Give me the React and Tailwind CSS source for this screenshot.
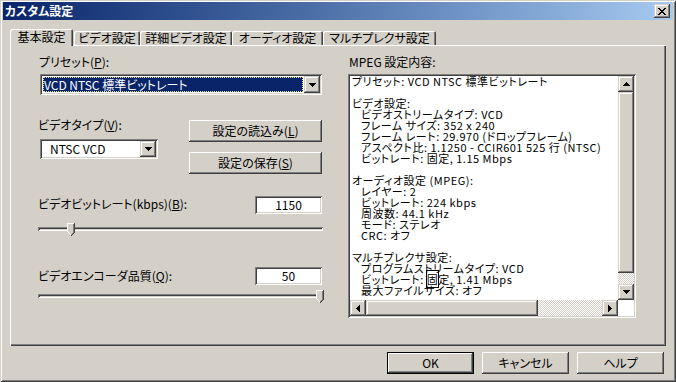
import React from 'react';

const raised = 'shadow-[inset_-1px_-1px_#404040,inset_1px_1px_#ffffff,inset_-2px_-2px_#808080,inset_2px_2px_#d4d0c8]';
const sbBtn = 'shadow-[inset_-1px_-1px_#404040,inset_1px_1px_#d4d0c8,inset_-2px_-2px_#808080,inset_2px_2px_#ffffff]';
const sunken = 'shadow-[inset_1px_1px_#808080,inset_-1px_-1px_#ffffff,inset_2px_2px_#404040,inset_-2px_-2px_#d4d0c8]';
const checker = 'bg-[repeating-conic-gradient(#d4d0c8_0_25%,#ffffff_0_50%)] bg-[length:2px_2px]';

function Arrow({ dir = 'down' }) {
  const rects = [0, 1, 2, 3].map((i) => {
    if (dir === 'down') return { x: i, y: i, w: 7 - 2 * i, h: 1 };
    if (dir === 'up') return { x: i, y: 3 - i, w: 7 - 2 * i, h: 1 };
    if (dir === 'right') return { x: i, y: i, w: 1, h: 7 - 2 * i };
    return { x: 3 - i, y: i, w: 1, h: 7 - 2 * i };
  });
  const vert = dir === 'up' || dir === 'down';
  return (
    <svg width={vert ? 7 : 4} height={vert ? 4 : 7} shapeRendering="crispEdges">
      {rects.map((r, i) => (
        <rect key={i} x={r.x} y={r.y} width={r.w} height={r.h} fill="#000" />
      ))}
    </svg>
  );
}

function Thumb() {
  return (
    <svg width="8" height="13" shapeRendering="crispEdges">
      <polygon points="0,0 8,0 8,9 4,13 0,9" fill="#d4d0c8" />
      <rect x="0" y="0" width="7" height="1" fill="#fff" />
      <rect x="0" y="0" width="1" height="9" fill="#fff" />
      <rect x="7" y="0" width="1" height="9" fill="#404040" />
      <rect x="6" y="1" width="1" height="8" fill="#808080" />
      <rect x="1" y="9" width="1" height="1" fill="#fff" />
      <rect x="2" y="10" width="1" height="1" fill="#fff" />
      <rect x="3" y="11" width="1" height="1" fill="#fff" />
      <rect x="7" y="9" width="1" height="1" fill="#404040" />
      <rect x="6" y="10" width="1" height="1" fill="#404040" />
      <rect x="5" y="11" width="1" height="1" fill="#404040" />
      <rect x="4" y="12" width="1" height="1" fill="#404040" />
      <rect x="6" y="9" width="1" height="1" fill="#808080" />
      <rect x="5" y="10" width="1" height="1" fill="#808080" />
      <rect x="4" y="11" width="1" height="1" fill="#808080" />
    </svg>
  );
}

function Slider({ pos }) {
  return (
    <div className="relative -ml-[2px] w-[285px] h-[13px]">
      <div className={`absolute left-0 right-0 top-[4px] h-[4px] ${sunken}`}></div>
      <div className="absolute top-0" style={{ left: pos }}>
        <Thumb />
      </div>
    </div>
  );
}

function Button({ children, w, def }) {
  return (
    <div
      className={`${w} h-[22px] flex items-center justify-center bg-[#d4d0c8] ${raised} ${def ? 'border border-black' : ''}`}
    >
      {children}
    </div>
  );
}

const tabs = [
  { label: '基本設定', w: 'w-[63px]', active: true },
  { label: 'ビデオ設定', w: 'w-[66px] ml-[1px]' },
  { label: '詳細ビデオ設定', w: 'w-[92px]' },
  { label: 'オーディオ設定', w: 'w-[91px]' },
  { label: 'マルチプレクサ設定', w: 'w-[113px]' },
];

const lines = [
  ['プリセット: VCD NTSC 標準ビットレート', 0],
  ['', 0],
  ['ビデオ設定:', 0],
  ['ビデオストリームタイプ: VCD', 1],
  ['フレーム サイズ: 352 x 240', 1],
  ['フレーム レート: 29.970 (ドロップフレーム)', 1],
  ['アスペクト比: 1.1250 - CCIR601 525 行 (NTSC)', 1],
  ['ビットレート: 固定, 1.15 Mbps', 1],
  ['', 0],
  ['オーディオ設定 (MPEG):', 0],
  ['レイヤー: 2', 1],
  ['ビットレート: 224 kbps', 1],
  ['周波数: 44.1 kHz', 1],
  ['モード: ステレオ', 1],
  ['CRC: オフ', 1],
  ['', 0],
  ['マルチプレクサ設定:', 0],
  ['プログラムストリームタイプ: VCD', 1],
  ['ビットレート: 固定, 1.41 Mbps', 1, true],
  ['最大ファイルサイズ: オフ', 1],
];

export default function App() {
  return (
    <div className="w-[676px] h-[382px] bg-[#d4d0c8] text-black text-[12px] font-['Noto_Sans_CJK_JP','Noto_Sans',sans-serif] [font-feature-settings:'palt'] shadow-[inset_1px_1px_#d4d0c8,inset_-1px_-1px_#404040,inset_2px_2px_#ffffff,inset_-2px_-2px_#808080] pt-[2px] px-[3px] flex flex-col overflow-hidden">
      {/* タイトルバー */}
      <div className="h-[18px] flex items-center justify-between bg-gradient-to-r from-[#0a246a] to-[#a6caf0] pl-[2px] pr-[3px]">
        <span className="text-white font-bold leading-[18px]">カスタム設定</span>
        <div className={`w-[16px] h-[14px] flex items-center justify-center bg-[#d4d0c8] ${sbBtn}`}>
          <svg width="8" height="7" shapeRendering="crispEdges">
            {[0, 1, 2, 3, 4, 5, 6].map((i) => (
              <g key={i}>
                <rect x={i} y={i} width="2" height="1" fill="#000" />
                <rect x={6 - i} y={i} width="2" height="1" fill="#000" />
              </g>
            ))}
          </svg>
        </div>
      </div>

      <div className="flex flex-col pl-[7px] pr-[7px]">
        {/* タブ */}
        <div className="flex items-end h-[16px] mt-[9px]">
          {tabs.map((t) => (
            <div
              key={t.label}
              className={`${t.w} flex items-center justify-center rounded-t-[2px] bg-[#d4d0c8] shadow-[inset_1px_1px_#ffffff,inset_-1px_0_#404040,inset_-2px_0_#808080] ${
                t.active ? 'h-[17px] -mb-[1px] relative z-10 pb-[2px]' : 'h-[14px]'
              }`}
            >
              <span className="leading-[14px] whitespace-nowrap">{t.label}</span>
            </div>
          ))}
        </div>

        {/* パネル */}
        <div className="h-[301px] flex pl-[30px] shadow-[inset_1px_1px_#ffffff,inset_-1px_-1px_#404040,inset_-2px_-2px_#808080]">
          {/* 左列 */}
          <div className="w-[282px] flex flex-col">
            <div className="mt-[10px] leading-[14px] -ml-[1px]">
              プリセット(<u>P</u>):
            </div>
            <div className={`mt-[5px] h-[21px] flex p-[2px] bg-white ${sunken}`}>
              <div className="flex-1 m-[1px] flex items-center bg-[#0a246a] text-white outline outline-1 outline-dotted outline-[#e0e090] -outline-offset-1 pl-[1px] whitespace-nowrap">
                VCD NTSC 標準ビットレート
              </div>
              <div className={`w-[16px] h-[17px] flex items-center justify-center bg-[#d4d0c8] ${sbBtn}`}>
                <Arrow dir="down" />
              </div>
            </div>

            <div className="flex mt-[23px]">
              <div className="w-[118px] flex flex-col">
                <div className="leading-[14px] -ml-[2px]">
                  ビデオタイプ(<u>V</u>):
                </div>
                <div className={`mt-[7px] h-[20px] flex p-[2px] bg-white ${sunken}`}>
                  <div className="flex-1 flex items-center pl-[8px] whitespace-nowrap">NTSC VCD</div>
                  <div className={`w-[16px] h-[16px] flex items-center justify-center bg-[#d4d0c8] ${sbBtn}`}>
                    <Arrow dir="down" />
                  </div>
                </div>
              </div>
              <div className="ml-[31px] flex flex-col">
                <div className="mt-[2px]">
                  <Button w="w-[133px]">
                    設定の読込み(<u>L</u>)
                  </Button>
                </div>
                <div className="mt-[10px]">
                  <Button w="w-[133px]">
                    設定の保存(<u>S</u>)
                  </Button>
                </div>
              </div>
            </div>

            <div className="mt-[22px] flex justify-between items-start h-[18px]">
              <span className="leading-[14px] mt-[1px] -ml-[2px] whitespace-nowrap">
                ビデオビットレート(kbps)(<u>B</u>):
              </span>
              <div className={`w-[67px] h-[18px] bg-white flex items-center justify-center ${sunken}`}>1150</div>
            </div>
            <div className="mt-[9px]">
              <Slider pos={29} />
            </div>

            <div className="mt-[31px] flex justify-between items-start h-[18px]">
              <span className="leading-[14px] mt-[2px] -ml-[2px] whitespace-nowrap">
                ビデオエンコーダ品質(<u>Q</u>):
              </span>
              <div className={`w-[67px] h-[18px] bg-white flex items-center justify-center ${sunken}`}>50</div>
            </div>
            <div className="mt-[5px]">
              <Slider pos={278} />
            </div>
          </div>

          {/* 右列 */}
          <div className="ml-[26px] w-[288px] flex flex-col">
            <div className="mt-[10px] leading-[14px] pl-[1px]">MPEG 設定内容:</div>
            <div className={`mt-[5px] h-[244px] bg-white p-[2px] ${sunken}`}>
              <div className="flex h-[224px]">
                <div className="w-[268px] overflow-hidden pl-[2px] text-[11px] tracking-[0.5px]">
                  {lines.map(([text, indent, mark], i) => (
                    <div key={i} className={`h-[11px] leading-[11px] whitespace-nowrap ${indent ? 'pl-[9px]' : ''}`}>
                      {mark ? (
                        <>
                          ビットレート: <span className="outline outline-1 outline-black">固</span>定, 1.41 Mbps
                        </>
                      ) : (
                        text || '\u00a0'
                      )}
                    </div>
                  ))}
                </div>
                <div className="w-[16px] flex flex-col bg-[#d4d0c8]">
                  <div className={`h-[16px] flex items-center justify-center ${sbBtn}`}>
                    <Arrow dir="up" />
                  </div>
                  <div className={`h-[181px] ${sbBtn}`}></div>
                  <div className={`h-[11px] ${checker}`}></div>
                  <div className={`h-[16px] flex items-center justify-center ${sbBtn}`}>
                    <Arrow dir="down" />
                  </div>
                </div>
              </div>
              <div className="flex h-[16px]">
                <div className={`w-[16px] flex items-center justify-center bg-[#d4d0c8] ${sbBtn}`}>
                  <Arrow dir="left" />
                </div>
                <div className={`w-[172px] bg-[#d4d0c8] ${sbBtn}`}></div>
                <div className={`w-[64px] ${checker}`}></div>
                <div className={`w-[16px] flex items-center justify-center bg-[#d4d0c8] ${sbBtn}`}>
                  <Arrow dir="right" />
                </div>
              </div>
            </div>
          </div>
        </div>

        {/* ボタン */}
        <div className="flex justify-end gap-[8px] mt-[6px] pr-[2px]">
          <Button w="w-[87px]" def>
            OK
          </Button>
          <Button w="w-[87px]">キャンセル</Button>
          <Button w="w-[87px]">ヘルプ</Button>
        </div>
      </div>
    </div>
  );
}
